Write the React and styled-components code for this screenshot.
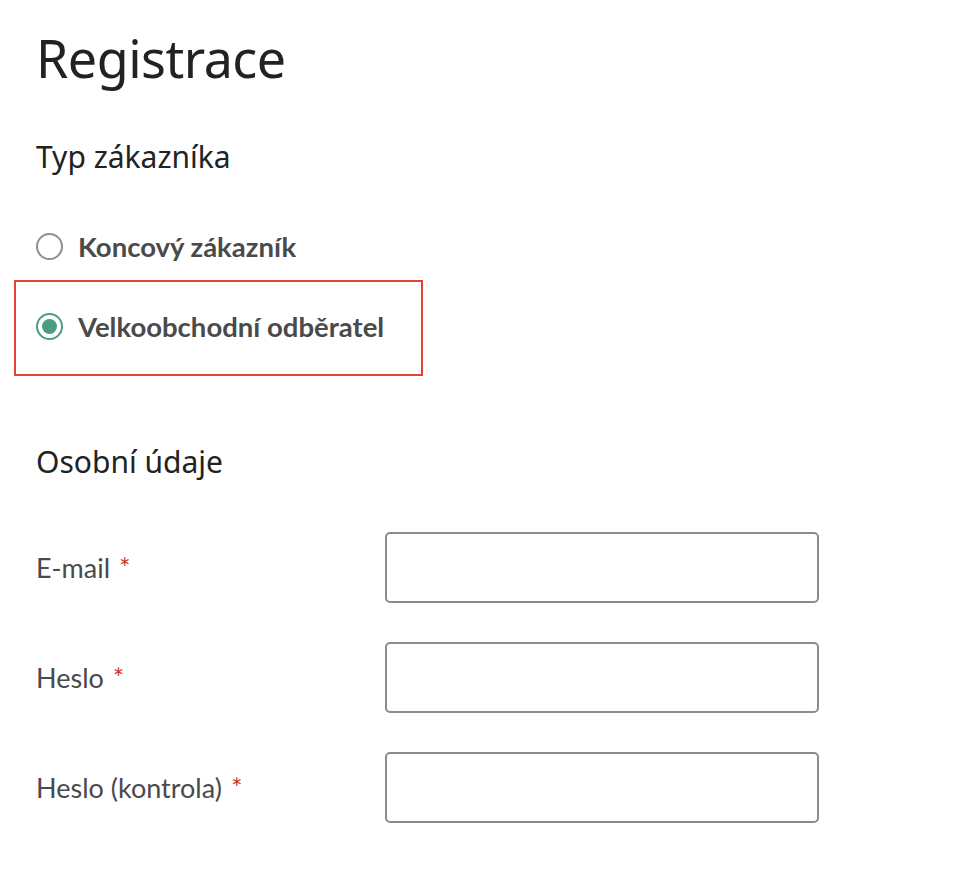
import React, { useState } from "react";
import styled, { createGlobalStyle } from "styled-components";

const GlobalStyle = createGlobalStyle`
  html, body {
    margin: 0;
    padding: 0;
    background: #fff;
  }
  body {
    font-family: "Lato", "Noto Sans", sans-serif;
    -webkit-font-smoothing: antialiased;
  }
`;

const Page = styled.div`
  padding: 0 36px;
  width: 783px;
`;

const Title = styled.h1`
  margin: 0;
  padding-top: 26px;
  font-family: "Noto Sans", "Lato", sans-serif;
  font-weight: 400;
  font-size: 52px;
  line-height: 64px;
  color: #222;
  letter-spacing: -0.5px;
`;

const SectionTitle = styled.h2`
  margin: ${(p) => p.$top} 0 0;
  font-family: "Noto Sans", "Lato", sans-serif;
  font-weight: 400;
  font-size: 30px;
  line-height: 40px;
  color: #222;
`;

const RadioGroup = styled.div`
  display: flex;
  flex-direction: column;
  margin-top: 52px;
  width: 387px;
`;

const Option = styled.label`
  display: flex;
  align-items: center;
  gap: 15px;
  height: ${(p) => (p.$boxed ? "89px" : "34px")};
  margin-left: ${(p) => (p.$boxed ? "-22px" : "0")};
  padding-left: ${(p) => (p.$boxed ? "20px" : "0")};
  margin-top: ${(p) => (p.$boxed ? "17px" : "0")};
  padding-bottom: ${(p) => (p.$boxed ? "3px" : "0")};
  border: ${(p) => (p.$boxed ? "2px solid #e5432d" : "none")};
  cursor: pointer;
  font-weight: 700;
  font-size: 27.5px;
  color: #4a4a4a;
  white-space: nowrap;
`;

const RadioDot = styled.span`
  flex: none;
  box-sizing: border-box;
  width: 27px;
  height: 27px;
  border-radius: 50%;
  border: ${(p) => (p.$checked ? "2.5px solid #4a9d80" : "2px solid #8e8e8e")};
  display: flex;
  align-items: center;
  justify-content: center;

  &::after {
    content: "";
    width: 15px;
    height: 15px;
    border-radius: 50%;
    background: #4a9d80;
    display: ${(p) => (p.$checked ? "block" : "none")};
  }
`;

const Form = styled.div`
  display: flex;
  flex-direction: column;
  gap: 39px;
  margin-top: 50px;
`;

const Row = styled.div`
  display: grid;
  grid-template-columns: 349px 434px;
  align-items: center;
`;

const Label = styled.span`
  font-size: 27px;
  color: #4a4a4a;
`;

const Required = styled.span`
  color: #c8372d;
  margin-left: 9px;
`;

const Input = styled.input`
  box-sizing: border-box;
  height: 71px;
  width: 100%;
  margin: 0;
  border: 2px solid #8c8c8c;
  border-radius: 5px;
  padding: 0 16px;
  font-size: 24px;
  font-family: inherit;
  outline: none;
`;

const options = ["Koncový zákazník", "Velkoobchodní odběratel"];
const fields = [
  { label: "E-mail", type: "email" },
  { label: "Heslo", type: "password" },
  { label: "Heslo (kontrola)", type: "password" },
];

const App = () => {
  const [type, setType] = useState(1);

  return (
    <Page>
      <GlobalStyle />
      <Title>Registrace</Title>
      <SectionTitle $top="47px">Typ zákazníka</SectionTitle>

      <RadioGroup>
        {options.map((opt, i) => (
          <Option key={opt} $boxed={i === 1} onClick={() => setType(i)}>
            <RadioDot $checked={type === i} />
            {opt}
          </Option>
        ))}
      </RadioGroup>

      <SectionTitle $top="66px">Osobní údaje</SectionTitle>

      <Form>
        {fields.map((f) => (
          <Row key={f.label}>
            <Label>
              {f.label}
              <Required>*</Required>
            </Label>
            <Input type={f.type} />
          </Row>
        ))}
      </Form>
    </Page>
  );
};

export default App;
